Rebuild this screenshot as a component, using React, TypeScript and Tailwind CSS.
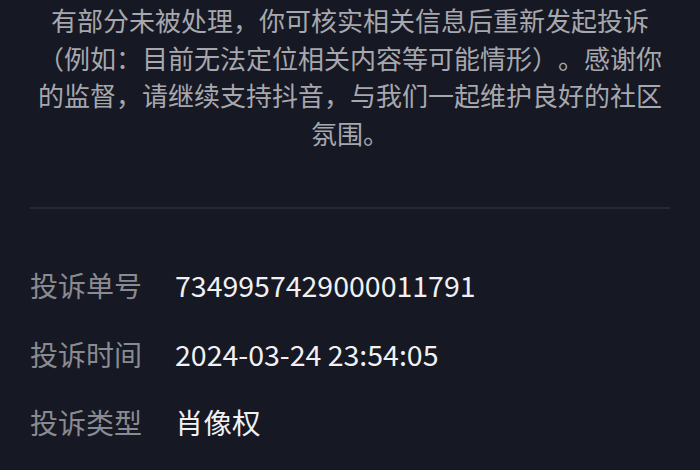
export default function App() {
  const rows = [
    { label: "投诉单号", value: "7349957429000011791" },
    { label: "投诉时间", value: "2024-03-24 23:54:05" },
    { label: "投诉类型", value: "肖像权" },
  ];

  return (
    <div
      className="h-[470px] w-[700px] overflow-hidden bg-[#161823] px-[30px]"
      style={{ fontFamily: '"Noto Sans CJK SC", "Noto Sans", sans-serif' }}
    >
      <div className="pt-[1px] text-center text-[26px] leading-[37.5px] text-[#a7a8ae] [text-spacing-trim:space-all]">
        <div>有部分未被处理，你可核实相关信息后重新发起投诉</div>
        <div>（例如：目前无法定位相关内容等可能情形）。感谢你</div>
        <div>的监督，请继续支持抖音，与我们一起维护良好的社区</div>
        <div>氛围。</div>
      </div>

      <div className="mt-[56px] h-[2px] bg-[#262833]" />

      <div className="mt-[56px] flex flex-col gap-[28.5px]">
        {rows.map((r) => (
          <div key={r.label} className="flex items-center text-[28px] leading-[40px]">
            <span className="w-[145px] text-[#8a8b92]">{r.label}</span>
            <span className="text-[28.5px] text-[#f1f1f3]">{r.value}</span>
          </div>
        ))}
      </div>
    </div>
  );
}
